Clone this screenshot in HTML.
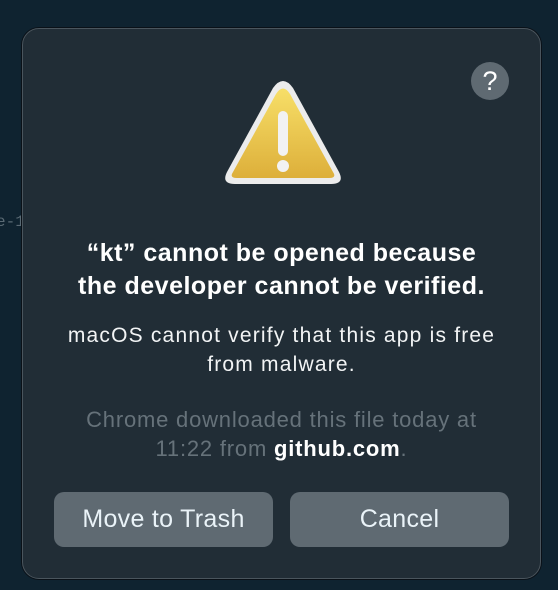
<!DOCTYPE html>
<html><head><meta charset="utf-8"><style>
html,body{margin:0;padding:0;}
body{width:558px;height:590px;background:#0f2330;position:relative;overflow:hidden;font-family:"Liberation Sans",sans-serif;}
.side{position:absolute;left:-4px;top:213px;color:#5a6a74;font-size:16px;font-family:"Liberation Mono",monospace;}
.dlg{position:absolute;left:22px;top:28px;width:517px;height:549px;background:#212d36;border:1px solid #4a555d;border-radius:17px;box-shadow:0 0 0 1px #0a1118;}
.help{position:absolute;left:448px;top:33px;width:38px;height:38px;border-radius:50%;background:#5f6a72;color:#fff;font-size:27px;text-align:center;line-height:38px;}
.tri{position:absolute;left:200px;top:51px;}
.t{position:absolute;left:-20px;width:557px;text-align:center;white-space:nowrap;}
.title{top:208px;font-size:25px;letter-spacing:0.5px;font-weight:bold;color:#fff;line-height:33px;}
.body{top:292px;font-size:21px;letter-spacing:1.2px;color:#f2f4f5;line-height:29px;}
.gray{top:376px;font-size:22px;letter-spacing:0.8px;color:#66727a;line-height:29px;}
.gray b{color:#fff;}
.btn{position:absolute;top:463px;height:55px;width:219px;background:#5f6a72;border-radius:10px;color:#eaf3f8;font-size:25px;letter-spacing:0.3px;text-align:center;line-height:55px;}
</style></head><body>
<div class="side">e-1</div>
<div class="dlg">
<div class="help">?</div>
<svg class="tri" width="120" height="108" viewBox="0 0 120 108">
<defs><linearGradient id="g" x1="0" y1="0" x2="0" y2="1"><stop offset="0" stop-color="#f7df68"/><stop offset="1" stop-color="#ddaf3a"/></linearGradient></defs>
<path d="M50 8 Q60 -6 70 8 L116 92 Q122 104 108 104 L12 104 Q-2 104 4 92 Z" fill="#ececec"/>
<path d="M53 14 Q60 3 67 14 L110 92 Q114 98 106 98 L14 98 Q6 98 10 92 Z" fill="url(#g)"/>
<rect x="55" y="31" width="10" height="45" rx="5" fill="#f2f2f2"/>
<circle cx="60" cy="86" r="6" fill="#f2f2f2"/>
</svg>
<div class="t title">“kt” cannot be opened because<br>the developer cannot be verified.</div>
<div class="t body">macOS cannot verify that this app is free<br>from malware.</div>
<div class="t gray">Chrome downloaded this file today at<br>11:22 from <b>github.com</b>.</div>
<div class="btn" style="left:31px">Move to Trash</div>
<div class="btn" style="left:267px">Cancel</div>
</div>
</body></html>
